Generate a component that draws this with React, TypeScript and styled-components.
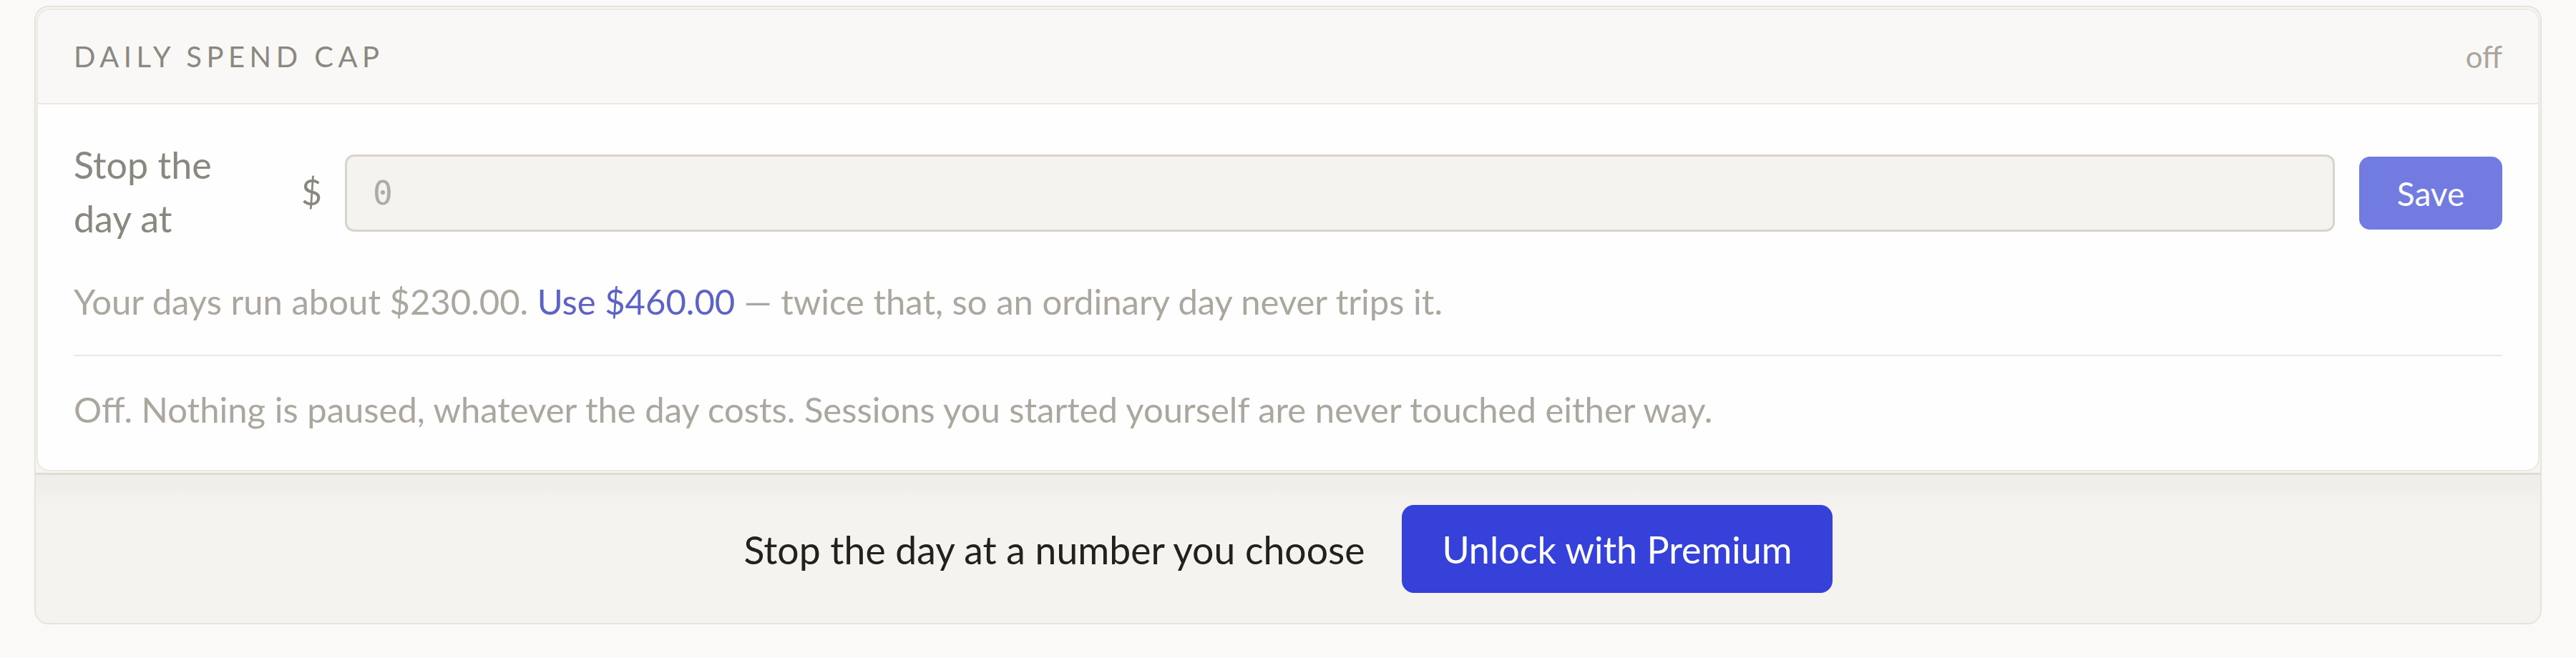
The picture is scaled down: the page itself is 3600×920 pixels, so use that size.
import React from "react";
import styled, { createGlobalStyle } from "styled-components";

const Global = createGlobalStyle`
  html, body { margin: 0; padding: 0; background: #faf9f7; }
  body { font-family: Lato, "Liberation Sans", sans-serif; }
  #root { padding: 8px 48px 0; }
  * { box-sizing: border-box; }
`;

const Locked = styled.section`
  border: 2px solid #e7e2da;
  border-radius: 20px;
  background: #f5f3ef;
  overflow: hidden;
  display: flex;
  flex-direction: column;
`;

const CardSlot = styled.div`
  padding: 2px 1px 2px;
  background: #f7f5f1;
`;

const Card = styled.div`
  border: 2px solid #ece9e2;
  border-radius: 18px;
  background: #fefefe;
  overflow: hidden;
`;

const Header = styled.header`
  height: 132px;
  display: flex;
  align-items: center;
  justify-content: space-between;
  padding: 0 50px 0 50px;
  background: #f9f8f6;
  border-bottom: 2px solid #ece9e2;
`;

const Title = styled.h2`
  margin: 0;
  font-size: 40px;
  font-weight: 400;
  letter-spacing: 6.5px;
  text-transform: uppercase;
  color: #8b887f;
`;

const Status = styled.span`
  font-size: 42px;
  color: #aaa69d;
`;

const Body = styled.div`
  padding: 47px 50px 52px;
  display: flex;
  flex-direction: column;
`;

const Row = styled.div`
  display: flex;
  align-items: center;
`;

const Label = styled.label`
  width: 260px;
  flex: none;
  font-size: 52px;
  line-height: 75px;
  color: #8a877e;
`;

const Currency = styled.span`
  margin-left: 58px;
  margin-right: 32px;
  font-size: 50px;
  color: #8a877e;
`;

const Amount = styled.input`
  flex: 1;
  min-width: 0;
  height: 108px;
  margin-top: 4px;
  border: 3px solid #d9d4cb;
  border-radius: 13px;
  background: #f5f3f0;
  padding: 0 36px;
  font-family: "DejaVu Sans Mono", "Liberation Mono", monospace;
  font-size: 46px;
  color: #55524c;
  outline: none;
  &::placeholder { color: #aeaba5; }
`;

const SaveButton = styled.button`
  margin-left: 34px;
  margin-top: 4px;
  width: 200px;
  height: 102px;
  border: none;
  border-radius: 15px;
  background: #717be0;
  color: #ffffff;
  font-family: Lato, "Liberation Sans", sans-serif;
  font-size: 46px;
  cursor: pointer;
`;

const Hint = styled.p<{ $spaced?: boolean }>`
  margin: ${(p) => (p.$spaced ? "45px" : "0")} 0 0;
  font-size: 49px;
  line-height: 66px;
  color: #aba79e;
`;

const Link = styled.a`
  color: #5c62c6;
  text-decoration: none;
  cursor: pointer;
`;

const Divider = styled.hr`
  margin: 42px 0 41px;
  border: none;
  height: 2px;
  background: #ebe8e1;
`;

const Footer = styled.footer`
  height: 210px;
  border-top: 3px solid #e0dbd3;
  background: linear-gradient(#efede9 0px, #f5f3ef 50px);
  display: flex;
  align-items: center;
  justify-content: center;
  gap: 52px;
`;

const Pitch = styled.span`
  font-size: 53.5px;
  color: #23211d;
`;

const Unlock = styled.button`
  height: 123px;
  padding: 0 56px;
  border: none;
  border-radius: 17px;
  background: #3541d8;
  color: #ffffff;
  font-family: Lato, "Liberation Sans", sans-serif;
  font-size: 52px;
  cursor: pointer;
`;

export default function App() {
  return (
    <>
      <Global />
      <Locked>
        <CardSlot>
          <Card>
            <Header>
              <Title>Daily spend cap</Title>
              <Status>off</Status>
            </Header>
            <Body>
              <Row>
                <Label htmlFor="cap">Stop the day at</Label>
                <Currency>$</Currency>
                <Amount id="cap" placeholder="0" inputMode="decimal" />
                <SaveButton>Save</SaveButton>
              </Row>
              <Hint $spaced>
                Your days run about $230.00. <Link>Use $460.00</Link> — twice that, so an ordinary day never trips it.
              </Hint>
              <Divider />
              <Hint>
                Off. Nothing is paused, whatever the day costs. Sessions you started yourself are never touched either way.
              </Hint>
            </Body>
          </Card>
        </CardSlot>
        <Footer>
          <Pitch>Stop the day at a number you choose</Pitch>
          <Unlock>Unlock with Premium</Unlock>
        </Footer>
      </Locked>
    </>
  );
}
